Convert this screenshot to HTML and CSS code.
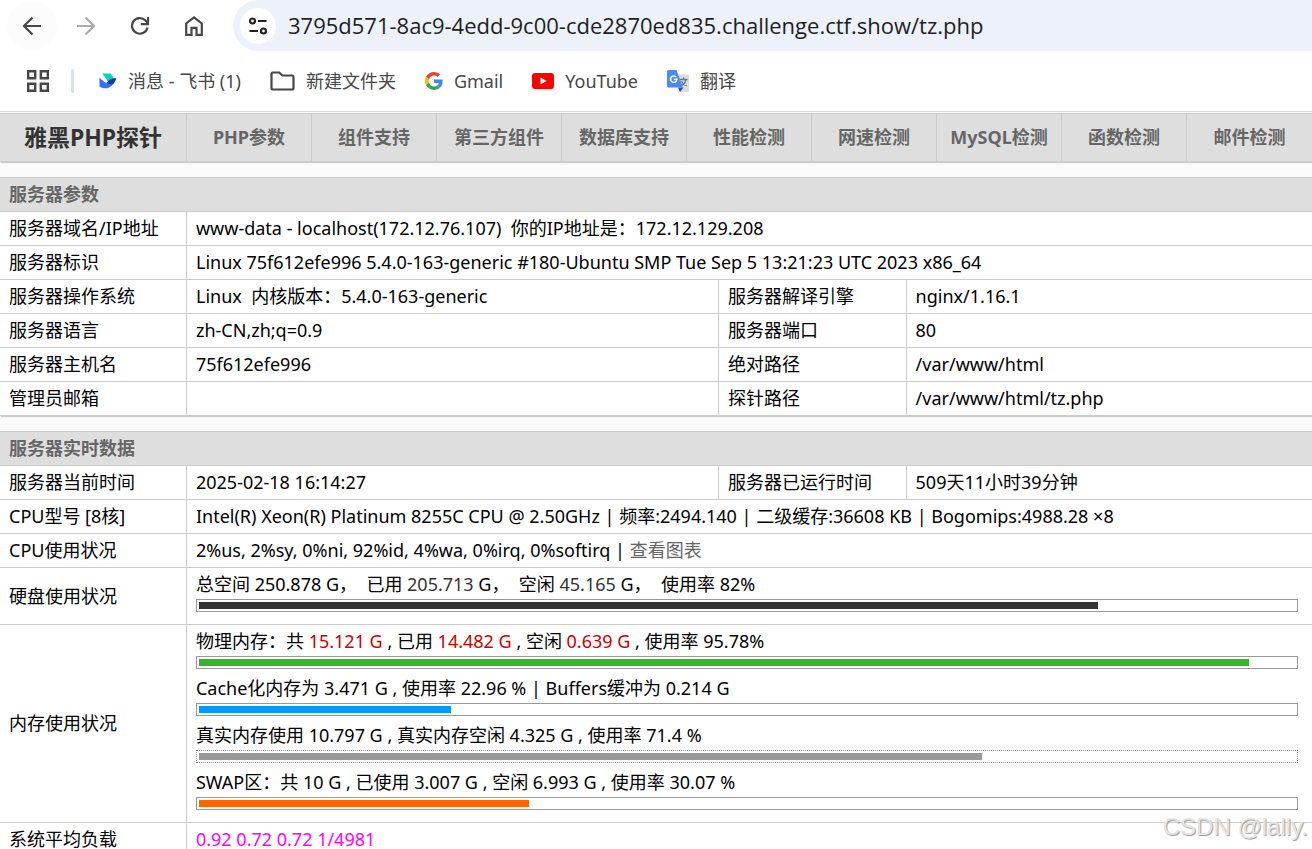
FILE: index.html
```html
<!DOCTYPE html>
<html lang="zh-CN">
<head>
<meta charset="utf-8">
<title>雅黑PHP探针</title>
<link rel="stylesheet" href="styles.css">
</head>
<body>
<div class="browser">
  <header class="chrome">
    <div class="toolbar">
      <button class="tool tool-back" aria-label="后退"><svg width="20" height="20" viewBox="0 0 20 20"><path d="M19 10H2.5M10.5 1.5 2 10l8.500 8.500" fill="none" stroke="#474747" stroke-width="2.200"/></svg></button>
      <button class="tool" aria-label="前进"><svg width="20" height="20" viewBox="0 0 20 20"><path d="M1 10h16.500M9.500 1.500 18 10l-8.500 8.500" fill="none" stroke="#ababab" stroke-width="2.200"/></svg></button>
      <button class="tool" aria-label="刷新"><svg width="20" height="20" viewBox="0 0 20 20"><path d="M17.500 11.500A7.800 7.800 0 1 1 15.500 4.500L18 7" fill="none" stroke="#474747" stroke-width="2.200"/><path d="M18 1v7.200h-7.200" fill="none" stroke="#474747" stroke-width="2.200"/></svg></button>
      <button class="tool" aria-label="主页"><svg width="20" height="20" viewBox="0 0 20 20"><path d="M2.200 18.900V7.500L10 1.500l7.800 6v11.400h-5.300v-7h-5v7z" fill="none" stroke="#474747" stroke-width="2.200"/></svg></button>
      <div class="address">
        <button class="site-info" aria-label="网站信息"><svg width="20" height="20" viewBox="0 0 20 20"><g fill="none" stroke="#1f1f1f" stroke-width="2.200"><circle cx="4.500" cy="5" r="2.500"/><path d="M10 5h8.500M1.500 15H10"/><circle cx="15.500" cy="15" r="2.500"/></g></svg></button>
        <input class="url" type="text" aria-label="地址" value="3795d571-8ac9-4edd-9c00-cde2870ed835.challenge.ctf.show/tz.php">
      </div>
    </div>
    <nav class="bookmarks" aria-label="书签">
      <button class="apps" aria-label="应用"><svg width="22" height="22" viewBox="0 0 22 22"><g fill="none" stroke="#474747" stroke-width="2.400"><path d="M1.200 1.200h7v7h-7zM13.800 1.200h7v7h-7zM1.200 13.800h7v7h-7zM13.800 13.800h7v7h-7z"/></g></svg></button>
      <span class="divider"></span>
      <a class="mark" href="#"><svg class="mark-icon" width="18" height="16" viewBox="0 0 18 16"><path d="M3 .5h8.500c1.600 1.500 2.500 3.300 3 5L9.500 9.500C7.500 6 5.500 3 3 .5z" fill="#00d6b9"/><path d="M7.500 10C10 7 12.500 4.700 17.500 5.500c-1.500 2-2 5-4.500 6.500-2 1.200-4 .5-5.500-2z" fill="#133c9a"/><path d="M.5 4.500C3.500 8 7.500 11 13.500 11.500 10 16.500 4 16 .5 13.500z" fill="#3370ff"/></svg>消息 - 飞书 (1)</a>
      <a class="mark" href="#"><svg class="mark-icon" width="25" height="20" viewBox="0 0 25 20"><path d="M2.500 1.500h6.800l3 3H22q1.500 0 1.500 1.500v11q0 1.500-1.500 1.500H3Q1.500 18.500 1.500 17V2.500z" fill="none" stroke="#474747" stroke-width="2.200"/></svg>新建文件夹</a>
      <a class="mark" href="#"><svg class="mark-icon" width="18" height="18" viewBox="0 0 48 48"><path fill="#ea4335" d="M24 9.500c3.540 0 6.710 1.220 9.210 3.600l6.850-6.850C35.900 2.380 30.470 0 24 0 14.620 0 6.510 5.380 2.560 13.220l7.980 6.190C12.430 13.720 17.740 9.500 24 9.500z"/><path fill="#4285f4" d="M46.980 24.550c0-1.570-.15-3.090-.38-4.550H24v9.020h12.940c-.58 2.960-2.260 5.480-4.780 7.180l7.730 6c4.510-4.180 7.090-10.360 7.090-17.650z"/><path fill="#fbbc05" d="M10.530 28.590a14.500 14.500 0 0 1 0-9.180l-7.980-6.190a24 24 0 0 0 0 21.560z"/><path fill="#34a853" d="M24 48c6.480 0 11.930-2.130 15.890-5.810l-7.730-6c-2.150 1.450-4.920 2.300-8.160 2.300-6.260 0-11.570-4.220-13.470-9.910l-7.980 6.190C6.510 42.620 14.620 48 24 48z"/></svg>Gmail</a>
      <a class="mark" href="#"><svg class="mark-icon" width="22" height="16" viewBox="0 0 22 16"><rect width="22" height="16" rx="3" fill="#f00"/><path d="M8.500 4.600v6.800l6-3.400z" fill="#fff"/></svg>YouTube</a>
      <a class="mark" href="#"><svg class="mark-icon" width="22" height="22" viewBox="0 0 22 22"><path d="M8 4.500h12.500q1.500 0 1.500 1.500v14.500q0 1.500-1.500 1.500H13z" fill="#dcdcdc"/><path d="M13 9.500h7.500M16.500 7.500v2M19 9.800c-.8 3-2.600 5-5 6.400M14.500 11c1 2.400 2.800 4 5.200 5" fill="none" stroke="#607988" stroke-width="1.300"/><path d="M11 17.500h5.500L13 22z" fill="#3746ab"/><path d="M1.500 0h8l6.500 17.500H1.500Q0 17.500 0 16V1.500Q0 0 1.500 0z" fill="#4a8af5"/><path d="M9.200 7.100A3.200 3.200 0 1 0 9.900 9.300H6.800" fill="none" stroke="#fff" stroke-width="1.500"/></svg>翻译</a>
    </nav>
  </header>

  <main class="page">
    <nav class="menu">
      <a class="menu-title" href="#">雅黑PHP探针</a>
      <a href="#">PHP参数</a>
      <a href="#">组件支持</a>
      <a href="#">第三方组件</a>
      <a href="#">数据库支持</a>
      <a href="#">性能检测</a>
      <a href="#">网速检测</a>
      <a href="#">MySQL检测</a>
      <a href="#">函数检测</a>
      <a href="#">邮件检测</a>
    </nav>

    <table class="info">
      <colgroup><col class="col-first"><col class="col-wide"><col class="col-label"><col></colgroup>
      <thead><tr><th colspan="4">服务器参数</th></tr></thead>
      <tbody>
        <tr><td>服务器域名/IP地址</td><td colspan="3">www-data - localhost(172.12.76.107)&nbsp; 你的IP地址是：172.12.129.208</td></tr>
        <tr><td>服务器标识</td><td colspan="3">Linux 75f612efe996 5.4.0-163-generic #180-Ubuntu SMP Tue Sep 5 13:21:23 UTC 2023 x86_64</td></tr>
        <tr><td>服务器操作系统</td><td>Linux &nbsp;内核版本：5.4.0-163-generic</td><td>服务器解译引擎</td><td>nginx/1.16.1</td></tr>
        <tr><td>服务器语言</td><td>zh-CN,zh;q=0.9</td><td>服务器端口</td><td>80</td></tr>
        <tr><td>服务器主机名</td><td>75f612efe996</td><td>绝对路径</td><td>/var/www/html</td></tr>
        <tr><td>管理员邮箱</td><td></td><td>探针路径</td><td>/var/www/html/tz.php</td></tr>
      </tbody>
    </table>

    <table class="info">
      <colgroup><col class="col-first"><col class="col-wide"><col class="col-label"><col></colgroup>
      <thead><tr><th colspan="4">服务器实时数据</th></tr></thead>
      <tbody>
        <tr><td>服务器当前时间</td><td>2025-02-18 16:14:27</td><td>服务器已运行时间</td><td>509天11小时39分钟</td></tr>
        <tr><td>CPU型号 [8核]</td><td colspan="3">Intel(R) Xeon(R) Platinum 8255C CPU @ 2.50GHz | 频率:2494.140 | 二级缓存:36608 KB | Bogomips:4988.28 ×8</td></tr>
        <tr><td>CPU使用状况</td><td colspan="3">2%us, 2%sy, 0%ni, 92%id, 4%wa, 0%irq, 0%softirq | <a class="chart-link" href="#">查看图表</a></td></tr>
        <tr><td>硬盘使用状况</td><td class="meters" colspan="3">
          总空间 250.878 G，&nbsp; 已用 <span class="dim">205.713</span> G，&nbsp; 空闲 <span class="dim">45.165</span> G，&nbsp; 使用率 82%
          <div class="bar"><div class="fill fill-disk" style="width:82%"></div></div>
        </td></tr>
        <tr><td>内存使用状况</td><td class="meters" colspan="3">
          物理内存：共 <span class="red">15.121 G</span> , 已用 <span class="red">14.482 G</span> , 空闲 <span class="red">0.639 G</span> , 使用率 95.78%
          <div class="bar"><div class="fill fill-memory" style="width:95.78%"></div></div>
          Cache化内存为 3.471 G , 使用率 22.96 % | Buffers缓冲为 0.214 G
          <div class="bar"><div class="fill fill-cache" style="width:22.96%"></div></div>
          真实内存使用 10.797 G , 真实内存空闲 4.325 G , 使用率 71.4 %
          <div class="bar bar-dotted"><div class="fill fill-real" style="width:71.4%"></div></div>
          SWAP区：共 10 G , 已使用 3.007 G , 空闲 6.993 G , 使用率 30.07 %
          <div class="bar"><div class="fill fill-swap" style="width:30.07%"></div></div>
        </td></tr>
        <tr><td>系统平均负载</td><td class="load" colspan="3">0.92 0.72 0.72 1/4981</td></tr>
      </tbody>
    </table>
  </main>
  <span class="watermark">CSDN @lally.</span>
</div>
</body>
</html>
```
FILE: styles.css
```css
* { box-sizing: border-box; }

body {
  margin: 0;
  background: #fafafa;
  color: #000;
  font: 18px/25px "Noto Sans", "Noto Sans CJK SC", sans-serif;
}

a { color: inherit; text-decoration: none; }

button {
  display: flex;
  align-items: center;
  justify-content: center;
  padding: 0;
  border: 0;
  background: none;
}

.browser {
  position: relative;
  height: 100vh;
  overflow: hidden;
}

/* Browser chrome */
.chrome {
  background: #fff;
  border-bottom: 1px solid #ddd;
}

.toolbar {
  display: flex;
  align-items: center;
  gap: 4px;
  height: 51px;
  padding-left: 7px;
}

.tool {
  flex: none;
  width: 50px;
  height: 50px;
  border-radius: 50%;
}

.tool-back { background: #fcfcfc; }

.address {
  display: flex;
  flex: 1;
  align-items: center;
  gap: 12px;
  height: 51px;
  margin-left: 10px;
  padding-left: 7px;
  border-radius: 26px 0 0 26px;
  background: #ecf1fa;
}

.site-info {
  flex: none;
  width: 36px;
  height: 36px;
  border-radius: 50%;
  background: #fff;
}

.url {
  flex: 1;
  min-width: 0;
  height: 32px;
  padding: 0 0 2px;
  border: 0;
  outline: 0;
  background: none;
  color: #1f1f1f;
  font: 22px/30px "Open Sans", "Noto Sans CJK SC", sans-serif;
}

.bookmarks {
  display: flex;
  align-items: center;
  height: 60px;
  padding-left: 27px;
  color: #474747;
}

.divider {
  width: 3px;
  height: 24px;
  margin: 0 25px 0 22px;
  border-radius: 2px;
  background: #d3e3fd;
}

.mark {
  display: flex;
  align-items: center;
  gap: 11px;
  margin-right: 29px;
  white-space: nowrap;
}

.mark-icon { flex: none; }

/* Probe page */
.page { padding-top: 1px; }

.menu {
  display: grid;
  grid-template-columns: 14.25% repeat(9, 1fr);
  margin-bottom: 15px;
  border: solid #ccc;
  border-width: 1px 0;
  background: #dedede;
  box-shadow: 1px 1px 1px #ccc;
  color: #666;
  font-weight: 700;
  line-height: 47px;
  text-align: center;
  white-space: nowrap;
}

.menu a { border-right: 1px solid #ccc; }

.menu a:last-child { border-right: 0; }

.menu .menu-title {
  color: #333;
  font-size: 23px;
}

.info {
  width: 100%;
  margin-bottom: 15px;
  border-top: 1px solid #ccc;
  border-spacing: 0;
  table-layout: fixed;
  background: #fff;
  box-shadow: 1px 1px 1px #ccc;
}

.col-first { width: 14.25%; }

.col-wide { width: 40.55%; }

.col-label { width: 14.3%; }

.info th,
.info td {
  height: 34px;
  padding: 4px 9px;
  border-bottom: 1px solid #ccc;
  text-align: left;
  white-space: nowrap;
}

.info th {
  background: #dedede;
  color: #666;
}

.info td:not(:last-child) { border-right: 1px solid #ccc; }

.info .meters { padding: 4px 14px 5px 9px; }

.bar {
  height: 13px;
  margin: 2px 0 7px;
  padding: 2px;
  border: 1px solid #999;
}

.bar-dotted { border-style: dotted; }

.fill { height: 7px; }

.fill-disk { background: #333; }
.fill-memory { background: #36b52a; }
.fill-cache { background: #09f; }
.fill-real { background: #999; }
.fill-swap { background: #f60; }

.chart-link { color: #666; }
.dim { color: #333; }
.red { color: #c00; }
.info .load { color: #f0f; }

.watermark {
  position: absolute;
  right: 4px;
  bottom: 7px;
  color: #e4e4e4;
  font: 24px/30px "Liberation Sans", sans-serif;
  text-shadow: 1px 1px 1px #999;
}
```
